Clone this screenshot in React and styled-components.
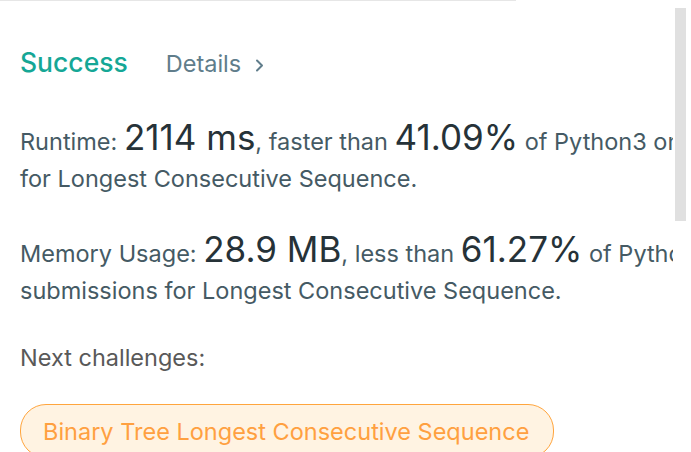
import React from 'react';
import styled, { createGlobalStyle } from 'styled-components';

const GlobalStyle = createGlobalStyle`
  html, body {
    margin: 0;
    padding: 0;
    background: #fff;
    overflow: hidden;
  }
  body {
    font-family: Inter, "Helvetica Neue", "Liberation Sans", sans-serif;
  }
`;

const Page = styled.div`
  display: flex;
  width: 691px;
  height: 452px;
  overflow: hidden;
`;

const Panel = styled.div`
  flex: 0 0 673px;
  overflow: hidden;
  display: flex;
  flex-direction: column;
`;

const TopBar = styled.div`
  width: 515px;
  height: 4px;
  background: #f7f7f7;
  border-bottom: 1px solid #e6e6e6;
  border-right: 1px solid #e6e6e6;
`;

const Content = styled.div`
  padding: 0 0 0 20px;
  white-space: nowrap;
`;

const Header = styled.div`
  display: flex;
  align-items: baseline;
  margin-top: 45px;
  height: 36px;
`;

const Status = styled.span`
  font-size: 26.5px;
  font-weight: 500;
  color: #15a796;
`;

const DetailsLink = styled.span`
  margin-left: 38px;
  font-size: 23.5px;
  color: #607d8b;
  display: flex;
  align-items: baseline;
  gap: 14px;
`;

const Chevron = styled.svg`
  width: 9px;
  height: 13px;
  align-self: center;
  margin-top: 3px;
`;

const Stat = styled.div`
  margin-top: ${({ first }) => (first ? '37px' : '34px')};
`;

const Line = styled.div`
  font-size: 23.5px;
  line-height: 37px;
  color: #455a64;
`;

const Big = styled.span`
  font-size: 35px;
  color: #263238;
`;

const NextLabel = styled.div`
  margin-top: 34px;
  font-size: 23.5px;
  line-height: 30px;
  color: #595959;
`;

const Pill = styled.div`
  display: inline-flex;
  align-items: center;
  margin-top: 31px;
  height: 52px;
  padding: 0 24px 0 22px;
  border-radius: 26px;
  border: 1px solid #ffa53d;
  background: #fff3e2;
  color: #ffa040;
  font-size: 23.5px;
`;

const ScrollTrack = styled.div`
  flex: 0 0 16px;
  padding: 8px 0 0 2px;
  border-right: 1px solid #efefef;
`;

const Thumb = styled.div`
  width: 11px;
  height: 213px;
  background: #e0e0e0;
`;

export default function App() {
  return (
    <Page>
      <GlobalStyle />
      <Panel>
        <TopBar />
        <Content>
          <Header>
            <Status>Success</Status>
            <DetailsLink>
              Details
              <Chevron viewBox="0 0 9 13">
                <path d="M2 1.5 L7 6.5 L2 11.5" fill="none" stroke="#607d8b" strokeWidth="2" strokeLinecap="round" strokeLinejoin="round" />
              </Chevron>
            </DetailsLink>
          </Header>
          <Stat first>
            <Line>
              Runtime: <Big>2114 ms</Big>, faster than <Big>41.09%</Big> of Python3 online submissions
            </Line>
            <Line>for Longest Consecutive Sequence.</Line>
          </Stat>
          <Stat>
            <Line>
              Memory Usage: <Big>28.9 MB</Big>, less than <Big>61.27%</Big> of Python3 online
            </Line>
            <Line>submissions for Longest Consecutive Sequence.</Line>
          </Stat>
          <NextLabel>Next challenges:</NextLabel>
          <Pill>Binary Tree Longest Consecutive Sequence</Pill>
        </Content>
      </Panel>
      <ScrollTrack>
        <Thumb />
      </ScrollTrack>
    </Page>
  );
}
